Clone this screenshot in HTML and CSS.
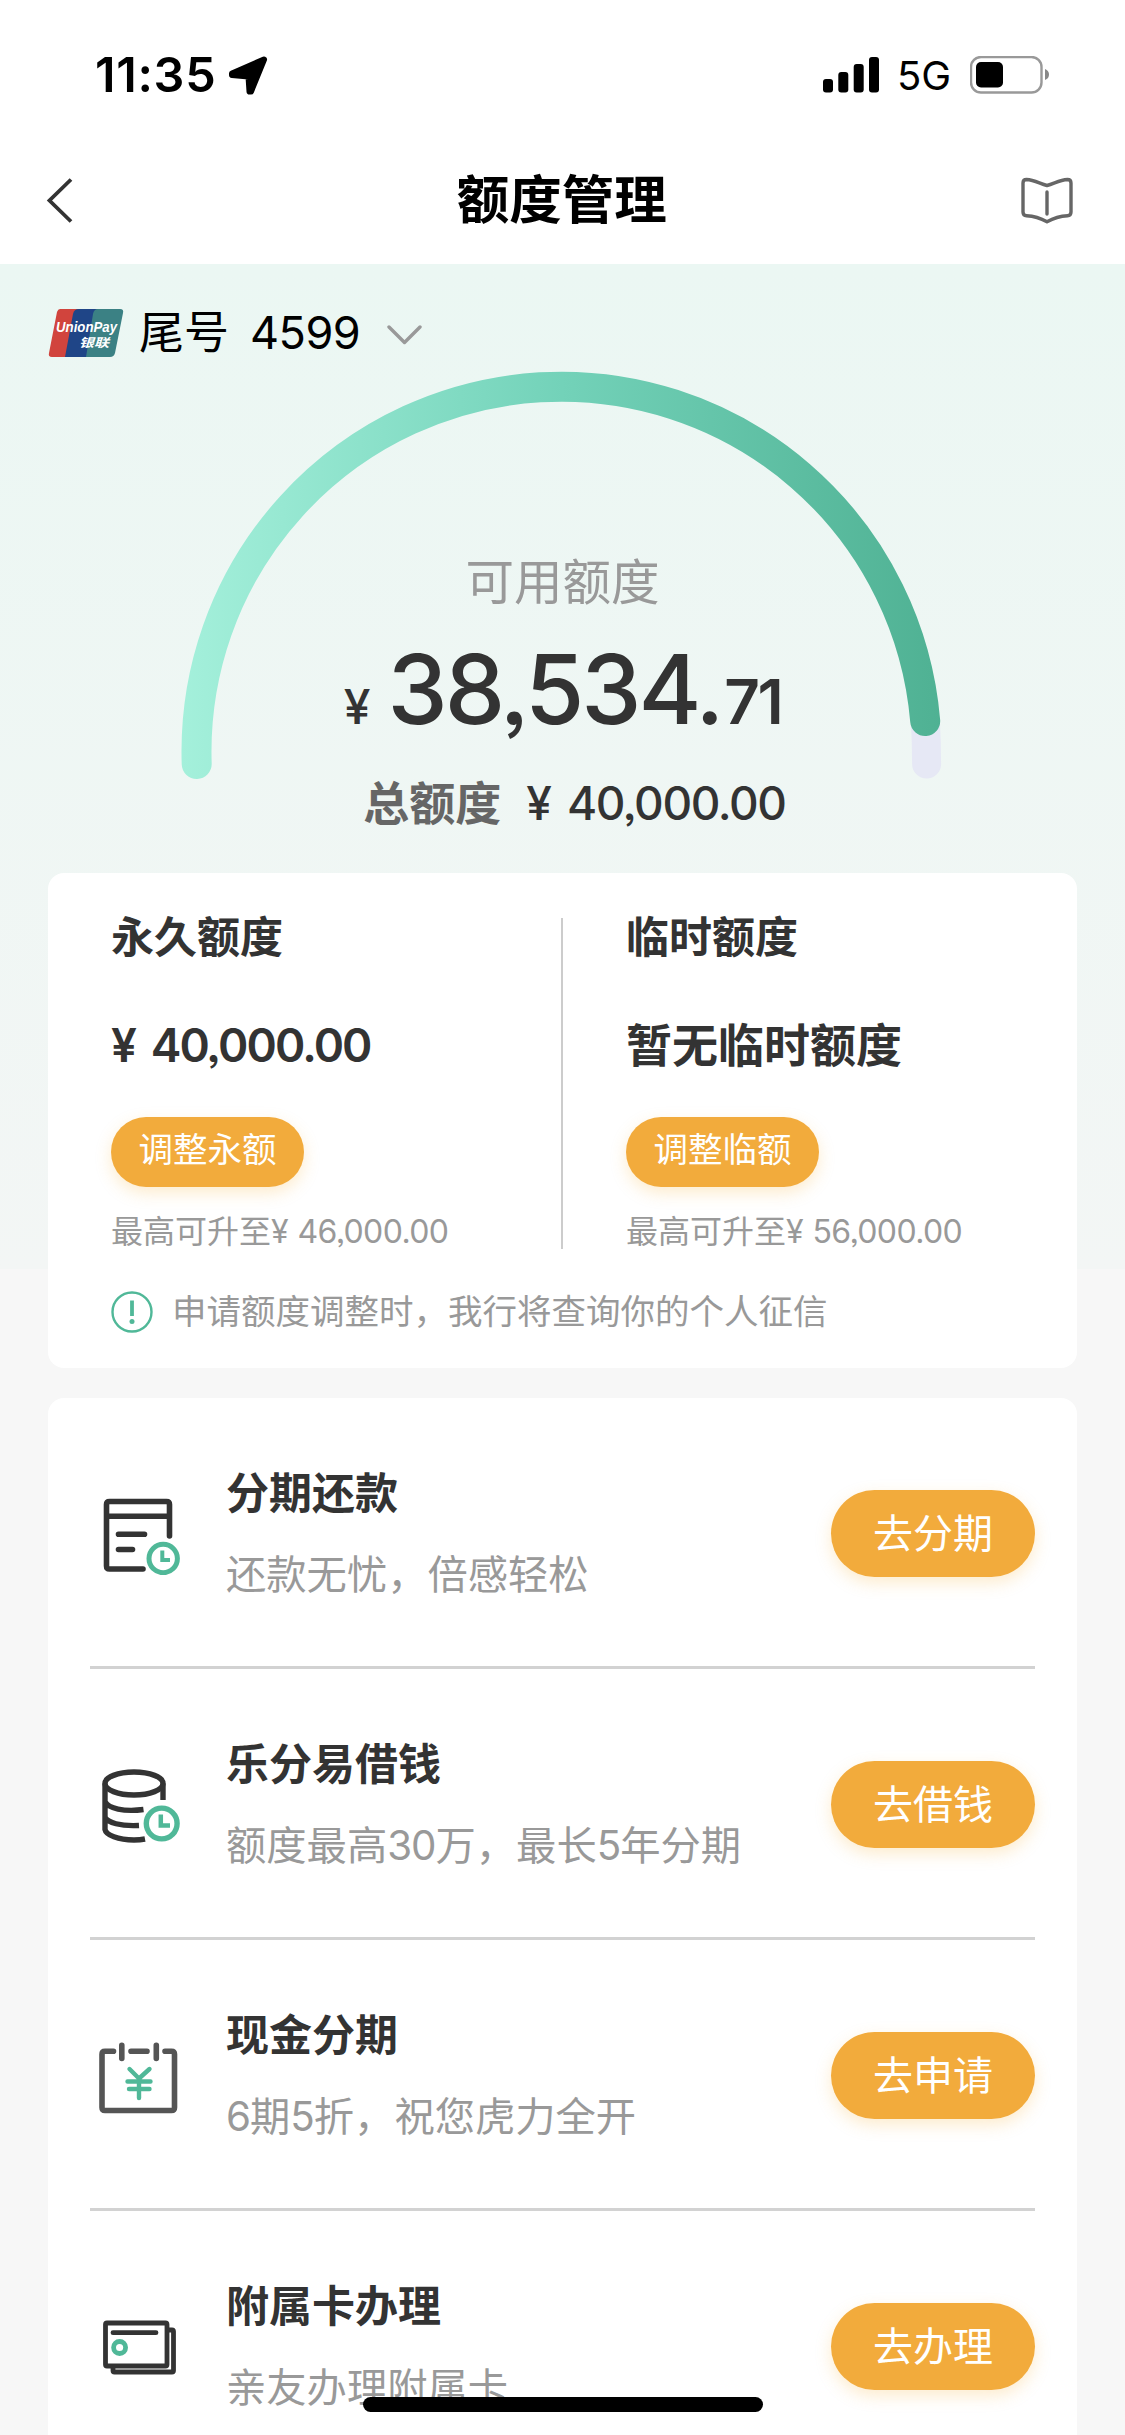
FILE: index.html
```html
<!DOCTYPE html>
<html lang="zh-CN">
<head>
<meta charset="utf-8">
<title>额度管理</title>
<link rel="stylesheet" href="styles.css">
</head>
<body>
<div class="screen">
  <div class="status">
    <span class="status-time">11:35</span>
    <svg class="status-loc" width="40" height="40" viewBox="228 55 40 40"><path d="M264 59.500L232 73.500V75L248.500 76.500L249.500 91.500L251 91.500Z" stroke="#000" stroke-width="6" stroke-linejoin="round"/></svg>
    <svg class="status-signal" width="56" height="36" viewBox="823 57 56 36"><rect x="823" y="79" width="10" height="13.500" rx="3"/><rect x="838.300" y="72" width="10" height="20.500" rx="3"/><rect x="853.700" y="64" width="10" height="28.500" rx="3"/><rect x="869" y="57" width="10" height="35.500" rx="3"/></svg>
    <span class="status-net">5G</span>
    <svg class="status-battery" width="80" height="38" viewBox="970 56 80 38"><rect x="971" y="57" width="70.500" height="35.500" rx="10" fill="none" stroke="#999" stroke-width="2.400"/><rect x="976" y="62" width="27" height="25.500" rx="5"/><path d="M1045 69Q1049 70.500 1049 74.500T1045 80Z" fill="#888"/></svg>
  </div>
  <header class="nav">
    <svg width="27" height="48" viewBox="46 175 27 48"><path d="M71 178.500L49.500 199.500L71 220.500" fill="none" stroke="#333" stroke-width="3.800"/></svg>
    <h1 class="nav-title">额度管理</h1>
    <svg width="54" height="48" viewBox="1019.500 175 54 48"><path d="M1046.500 184.500C1039 182.500 1034 179 1026 178.500Q1022.500 178.500 1022.500 182V211Q1022.500 214.500 1026 214.700C1034 215 1040 217 1046.500 220.700C1053 217 1059 215 1067 214.700Q1070.500 214.500 1070.500 211V182Q1070.500 178.500 1067 178.500C1059 179 1054 182.500 1046.500 184.500ZM1046.500 191V213" fill="none" stroke="#666" stroke-width="3.400" stroke-linecap="round" stroke-linejoin="round"/></svg>
  </header>

  <main class="content">
    <div class="account">
      <svg width="76" height="50" viewBox="0 0 76 50">
        <path d="M12 1H34L22 49H4Q0 49 1 45L9 4Q10 1 12 1Z" fill="#d1443d"/>
        <path d="M31 1H52L42 49H17L25 6Q26 1 31 1Z" fill="#1f4587"/>
        <path d="M50 1H72Q76 1 75 5L67 45Q66 49 62 49H38L45 6Q46 1 50 1Z" fill="#3b8184"/>
        <text class="logo-latin" x="8" y="23.500" textLength="61" lengthAdjust="spacingAndGlyphs">UnionPay</text>
        <text class="logo-han" x="31" y="38.500" textLength="30" lengthAdjust="spacingAndGlyphs">银联</text>
      </svg>
      <span class="account-label">尾号</span>
      <span class="account-number">4599</span>
      <svg class="account-arrow" width="36" height="22" viewBox="0 0 36 22"><path d="M2 3L17.500 18.500L33 3" fill="none" stroke="#999" stroke-width="3.400" stroke-linecap="round" stroke-linejoin="round"/></svg>
    </div>

    <section class="gauge">
      <svg class="gauge-arc" width="764" height="420" viewBox="180 363 764 420">
        <defs><linearGradient id="arc" gradientUnits="userSpaceOnUse" x1="182" y1="0" x2="942" y2="0"><stop offset="0" stop-color="#a4f0db"/><stop offset=".5" stop-color="#73d2b9"/><stop offset="1" stop-color="#4fb193"/></linearGradient></defs>
        <path d="M925.400 721Q926.500 742 926.600 764" fill="none" stroke="#e6e8f5" stroke-width="29" stroke-linecap="round"/>
        <path d="M196.700 764A365 365 0 0 1 925.200 721" fill="none" stroke="url(#arc)" stroke-width="30" stroke-linecap="round"/>
      </svg>
      <div class="gauge-text">
        <div class="gauge-label">可用额度</div>
        <div class="gauge-amount"><span class="yen">¥</span><span class="whole">38,534.</span><span class="cents">71</span></div>
        <div class="gauge-total"><span class="total-label">总额度</span><span class="total-yen">¥</span><span class="total-value">40,000.00</span></div>
      </div>
    </section>

    <section class="card limits">
      <div class="limit-columns">
        <div class="limit">
          <h2 class="limit-title">永久额度</h2>
          <div class="limit-amount num">¥ 40,000.00</div>
          <button class="pill small">调整永额</button>
          <div class="limit-max">最高可升至<span class="max-num">¥ 46,000.00</span></div>
        </div>
        <div class="rule"></div>
        <div class="limit">
          <h2 class="limit-title">临时额度</h2>
          <div class="limit-amount">暂无临时额度</div>
          <button class="pill small">调整临额</button>
          <div class="limit-max">最高可升至<span class="max-num">¥ 56,000.00</span></div>
        </div>
      </div>
      <div class="notice">
        <svg width="42" height="42" viewBox="0 0 42 42"><circle cx="21" cy="21" r="19.500" fill="none" stroke="#50b898" stroke-width="2.400"/><path d="M21 9.500V25" stroke="#50b898" stroke-width="3.800"/><circle cx="21" cy="30.500" r="2.500" fill="#50b898"/></svg>
        <span>申请额度调整时，我行将查询你的个人征信</span>
      </div>
    </section>

    <section class="card services">
      <div class="service">
        <svg class="service-icon" viewBox="99 1492.500 82 82" fill="none" stroke="#333" stroke-width="5.600" stroke-linecap="round" stroke-linejoin="round"><path d="M169.500 1535.500V1504Q169.500 1501 166.500 1501H109.500Q106.500 1501 106.500 1504V1565.500Q106.500 1568.500 109.500 1568.500H143M107 1515.700H169M118.500 1533.800H144.500M118.500 1549H132.500"/><g stroke="#50b898" stroke-width="5"><circle cx="163.200" cy="1558" r="14.200"/><path d="M162.300 1550V1559.500H170" stroke-width="4" stroke-linecap="butt" stroke-linejoin="miter"/></g></svg>
        <div class="service-text"><h3>分期还款</h3><p>还款无忧，倍感轻松</p></div>
        <button class="pill">去分期</button>
      </div>
      <div class="service">
        <svg class="service-icon" viewBox="99 1763.500 82 82" fill="none" stroke="#333" stroke-width="5.400"><ellipse cx="134" cy="1783" rx="29" ry="11.500"/><path d="M105 1783V1829C106 1834.500 118 1839.500 134 1839.500Q140 1839.500 145 1838.500M163 1783V1799.500M105 1801C108 1808 124 1811.500 143.500 1809M105 1817C108 1822 120 1826 139 1825"/><g stroke="#50b898"><circle cx="161.700" cy="1823" r="15.400"/><path d="M160.800 1814V1825H170" stroke-width="4.500"/></g></svg>
        <div class="service-text"><h3>乐分易借钱</h3><p>额度最高<span class="n">30</span>万，最长<span class="n">5</span>年分期</p></div>
        <button class="pill">去借钱</button>
      </div>
      <div class="service">
        <svg class="service-icon" viewBox="99 2034.500 82 82" fill="none" stroke="#555" stroke-width="5.600" stroke-linecap="round" stroke-linejoin="round"><path d="M113.500 2050.700H105Q102 2050.700 102 2053.700V2107Q102 2110 105 2110H171.500Q174.500 2110 174.500 2107V2053.700Q174.500 2050.700 171.500 2050.700H165M131 2050.700H147M121.800 2044.700V2058M156.300 2044.700V2058"/><path d="M129.500 2068.500L139 2078L149.500 2068.500M139 2078V2097.500M127.500 2081H150.500M129 2088.500H149.500" stroke="#50b898" stroke-width="4.400"/></svg>
        <div class="service-text"><h3>现金分期</h3><p><span class="n">6</span>期<span class="n">5</span>折，祝您虎力全开</p></div>
        <button class="pill">去申请</button>
      </div>
      <div class="service">
        <svg class="service-icon" viewBox="99 2305.500 82 82" fill="none" stroke="#333" stroke-width="4.800" stroke-linecap="round" stroke-linejoin="round"><rect x="105.500" y="2322.500" width="61.500" height="43" rx="1.500"/><path d="M168 2329.500H172Q173.500 2329.500 173.500 2331V2370Q173.500 2371.500 172 2371.500H114.500Q113 2371.500 113 2370V2367M113 2332.200H156"/><circle cx="119.600" cy="2347" r="6" stroke="#50b898"/></svg>
        <div class="service-text"><h3>附属卡办理</h3><p>亲友办理附属卡</p></div>
        <button class="pill">去办理</button>
      </div>
    </section>
  </main>
  <div class="home-indicator"></div>
</div>
</body>
</html>
```
FILE: styles.css
```css
* { box-sizing: border-box; margin: 0; padding: 0; }

body {
  font-family: Inter, "Noto Sans CJK SC", sans-serif;
  font-feature-settings: "ss03";
  color: #333;
  background: #f7f7f7;
}

svg { display: block; flex: none; }

.screen {
  position: relative;
  width: 1125px;
  height: 2435px;
  overflow: hidden;
}

.status {
  display: flex;
  align-items: center;
  height: 132px;
  padding: 18px 75px 0 95px;
  background: #fff;
  color: #000;
}
.status-time { font-size: 48.500px; font-weight: 600; line-height: 56px; letter-spacing: .7px; width: 133px; white-space: nowrap; }
.status-signal { margin-left: auto; }
.status-net { font-size: 40px; line-height: 48px; width: 71px; padding: 2px 0 0 18px; }
.status-battery { margin-left: 20px; }

.nav {
  display: flex;
  align-items: center;
  justify-content: space-between;
  height: 132px;
  padding: 3px 50.5px 0 46px;
  background: #fff;
}
.nav-title { font-size: 52.500px; font-weight: 700; line-height: 60px; color: #000; padding-left: 30px; }

.content {
  padding: 39px 48px 0;
  background: linear-gradient(#ebf7f3, #f3f6f5) 0 0 / 100% 1005px no-repeat;
}

.account { display: flex; align-items: center; height: 60px; color: #000; font-size: 45px; line-height: 60px; }
.account-label { margin-left: 15px; }
.account-number { margin-left: 21px; letter-spacing: -.5px; }
.account-arrow { margin-left: 27px; margin-top: 3px; }
.logo-latin { font: italic 700 14px "Liberation Sans", sans-serif; fill: #fff; }
.logo-han { font: italic 700 12px "Noto Sans CJK SC", sans-serif; fill: #fff; }

.gauge { display: grid; height: 510px; justify-items: center; }
.gauge-arc, .gauge-text { grid-area: 1 / 1; }
.gauge-arc { justify-self: start; margin-left: 132px; }
.gauge-text { padding-top: 190px; }
.gauge-label { font-size: 48.500px; line-height: 60px; color: #999; text-align: center; }
.gauge-amount { display: flex; align-items: baseline; justify-content: center; height: 100px; margin-top: 26px; line-height: 100px; white-space: nowrap; }
.yen { font-size: 48px; font-weight: 500; }
.whole { font-size: 96px; font-weight: 500; margin-left: 17px; letter-spacing: -3px; }
.cents { font-size: 62px; font-weight: 600; margin-left: 3px; letter-spacing: -2.5px; }
.gauge-total { display: flex; justify-content: center; margin-top: 34px; margin-left: 24px; font-size: 46px; font-weight: 500; line-height: 60px; white-space: nowrap; }
.total-label { color: #666; font-weight: 700; }
.total-yen { margin-left: 25px; }
.total-value { margin-left: 15px; letter-spacing: -1.4px; }

.card { background: #fff; border-radius: 16px; }

.limits { height: 495px; padding: 39px 0 0 63px; }
.limit-columns { display: grid; grid-template-columns: 450px 2px 1fr; }
.limit + .rule + .limit { padding-left: 63px; }
.rule { background: #ccc; margin: 6px 0 3px; }
.limit-title { font-size: 43px; font-weight: 700; line-height: 50px; }
.limit-amount { margin-top: 58px; font-size: 46px; font-weight: 700; line-height: 50px; white-space: nowrap; }
.limit-amount.num { font-weight: 600; letter-spacing: -1.9px; word-spacing: 6px; }
.limit-max { margin-top: 25px; font-size: 32px; line-height: 40px; color: #999; white-space: nowrap; }
.max-num { letter-spacing: -.6px; word-spacing: 1px; }

.pill {
  display: block;
  flex: none;
  width: 204px;
  height: 87px;
  border: 0;
  border-radius: 44px;
  background: #f2ab3c;
  box-shadow: 0 6px 16px rgba(246, 178, 60, .25);
  color: #fff;
  font: 400 40px/87px Inter, "Noto Sans CJK SC", sans-serif;
}
.pill.small { width: 193px; height: 70px; margin-top: 47px; font-size: 34.500px; line-height: 66px; padding-bottom: 4px; }

.notice { display: flex; margin-top: 39px; font-size: 34.500px; line-height: 42px; color: #999; white-space: nowrap; }
.notice span { margin-left: 19px; }

.services { margin-top: 30px; padding: 0 42px; }
.service { display: flex; align-items: center; height: 271px; padding-top: 3px; border-bottom: 3px solid #d2d2d2; }
.service-icon { width: 82px; height: 82px; margin-left: 9px; }
.service-text { flex: 1; margin-left: 45px; white-space: nowrap; }
.service-text h3 { font-size: 43px; font-weight: 700; line-height: 50px; }
.service-text p { margin-top: 32px; font-size: 40.300px; line-height: 50px; color: #999; }
.service-text .n { letter-spacing: -1px; }

.home-indicator {
  position: absolute;
  left: 363px;
  bottom: 23px;
  width: 400px;
  height: 15px;
  border-radius: 8px;
  background: #000;
}
```
